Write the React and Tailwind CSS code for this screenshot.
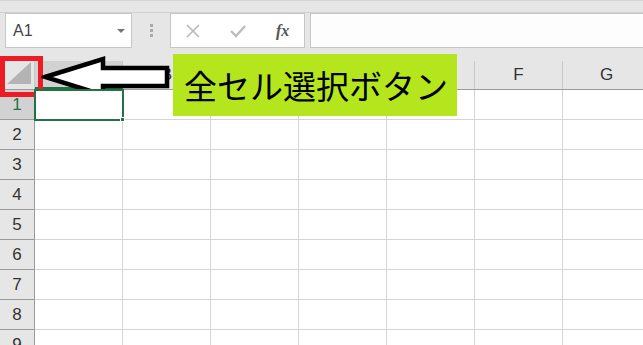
import React from 'react';

const cols = ['A', 'B', 'C', 'D', 'E', 'F', 'G'];
const rows = [1, 2, 3, 4, 5, 6, 7, 8, 9];

export default function App() {
  return (
    <div className="relative w-[643px] h-[345px] overflow-hidden bg-[#e6e6e6] font-['Liberation_Sans','Noto_Sans_CJK_JP',sans-serif]">
      {/* top strip */}
      <div className="h-[13px] border-t border-[#d4d4d4] border-b border-b-[#d0d0d0]" />

      {/* formula bar */}
      <div className="flex h-[35px] items-stretch">
        <div className="ml-[5px] flex w-[127px] items-center justify-between border border-[#c6c6c6] bg-white pl-[7px] pr-[6px]">
          <span className="text-[16px] text-[#444]">A1</span>
          <span className="h-0 w-0 border-x-[4px] border-t-[4px] border-x-transparent border-t-[#777]" />
        </div>
        <div className="flex w-[38px] flex-col items-center justify-center gap-[2px]">
          <span className="h-[3px] w-[3px] bg-[#a9a9a9]" />
          <span className="h-[3px] w-[3px] bg-[#a9a9a9]" />
          <span className="h-[3px] w-[3px] bg-[#a9a9a9]" />
        </div>
        <div className="flex w-[135px] items-center border border-[#c6c6c6] bg-white">
          <svg width="14" height="14" viewBox="0 0 14 14" className="ml-[15px]">
            <path d="M1 1 L13 13 M13 1 L1 13" stroke="#b9b9b9" strokeWidth="1.6" />
          </svg>
          <svg width="16" height="14" viewBox="0 0 16 14" className="ml-[30px]">
            <path d="M1 7 L6 12 L15 2" stroke="#bcbcbc" strokeWidth="2.4" fill="none" />
          </svg>
          <span className="ml-[30px] font-['Liberation_Serif',serif] text-[16px] font-bold italic text-[#555]">fx</span>
        </div>
        <div className="ml-[5px] flex-1 border border-r-0 border-[#c6c6c6] bg-[#fdfdfd]" />
      </div>

      <div className="h-[13px]" />

      {/* grid */}
      <div className="flex flex-col">
        <div className="flex h-[29px] border-b border-[#9b9b9b]">
          <div className="relative w-[35px] shrink-0 border-r border-[#c8c8c8]">
            <svg width="24" height="22" viewBox="0 0 24 22" className="absolute bottom-[5px] right-[3px]">
              <polygon points="24,0 24,22 0,22" fill="#b4b4b4" />
            </svg>
          </div>
          {cols.map((c, i) => (
            <div
              key={c}
              className={`flex w-[88px] shrink-0 items-center justify-center border-r border-[#c8c8c8] text-[17px] ${i === 0 ? 'bg-[#d2d2d2] text-[#217346] border-b-2 border-b-[#217346]' : 'text-[#333]'}`}
            >
              {c}
            </div>
          ))}
        </div>
        {rows.map((r) => (
          <div key={r} className="flex h-[30px] shrink-0">
            <div
              className={`flex w-[35px] shrink-0 items-center justify-center border-b border-r border-[#9b9b9b] text-[17px] ${r === 1 ? 'bg-[#d2d2d2] text-[#217346]' : 'bg-[#e6e6e6] text-[#333]'}`}
            >
              {r}
            </div>
            {cols.map((c, i) => (
              <div
                key={c}
                className={`relative w-[88px] shrink-0 border-b border-r border-[#d4d4d4] bg-white ${r === 1 && i === 0 ? 'outline-2 outline-[#217346] -outline-offset-1 z-10' : ''}`}
              >
                {r === 1 && i === 0 && (
                  <span className="absolute -bottom-[3px] -right-[3px] h-[5px] w-[5px] border border-white bg-[#217346]" />
                )}
              </div>
            ))}
          </div>
        ))}
      </div>

      {/* annotations */}
      <div className="absolute left-0 top-[56px] h-[41px] w-[43px] border-[5px] border-[#ed1c24]" />
      <svg width="130" height="44" viewBox="0 0 130 44" className="absolute left-[41px] top-[55px]">
        <polygon
          points="4,22 62,4 62,13 126,13 126,31 62,31 62,40"
          fill="white"
          stroke="black"
          strokeWidth="4.5"
          strokeLinejoin="miter"
        />
      </svg>
      <div className="absolute left-[173px] top-[54px] flex h-[62px] w-[284px] items-center bg-[#b5e61d] pl-[11px] font-['Noto_Sans_CJK_JP',sans-serif] text-[33px] leading-none text-black">
        全セル選択ボタン
      </div>
    </div>
  );
}
